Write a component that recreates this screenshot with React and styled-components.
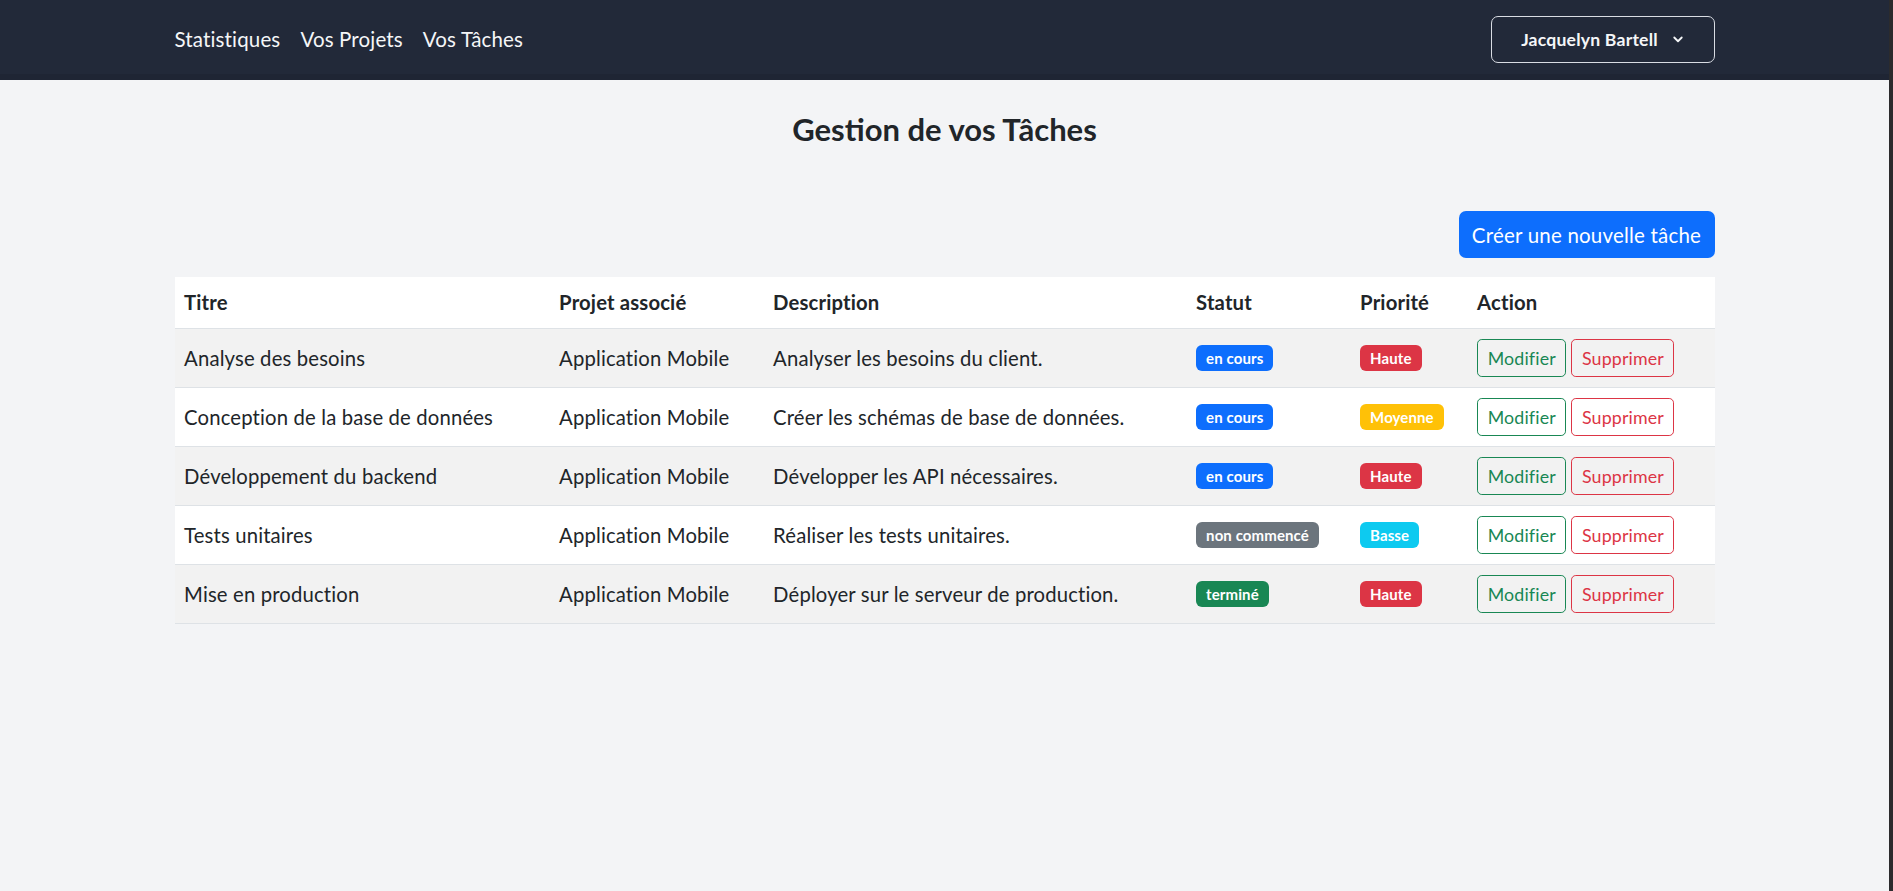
import React from "react";
import styled, { createGlobalStyle } from "styled-components";

const Global = createGlobalStyle`
  html {
    min-height: 100%;
    border-right: 4px solid #2b2b2d;
    background: #f3f4f6;
  }
  body {
    margin: 0;
    background: #f3f4f6;
    font-family: "Lato", "Inter", sans-serif;
    color: #212529;
    font-size: 20.3px;
    letter-spacing: 0.15px;
  }
  * { box-sizing: border-box; }
`;

const Nav = styled.nav`
  height: 80px;
  background: #222939;
  box-shadow: inset 0 -6px 0 #1f2534;
`;

const NavInner = styled.div`
  width: 1540px;
  margin: 0 auto;
  height: 100%;
  display: flex;
  align-items: center;
  justify-content: space-between;
  padding-bottom: 2px;
`;

const Links = styled.div`
  display: flex;
  gap: 20px;
  align-items: center;
`;

const NavLink = styled.a`
  color: #f5f6f8;
  font-size: 20.5px;
  text-decoration: none;
  cursor: pointer;
`;

const UserButton = styled.button`
  width: 224px;
  height: 47px;
  background: transparent;
  border: 1px solid #d9dce3;
  border-radius: 7px;
  color: #f5f6f8;
  font-family: inherit;
  font-size: 17.6px;
  font-weight: 700;
  letter-spacing: 0.2px;
  display: flex;
  align-items: center;
  justify-content: center;
  gap: 14px;
`;

const Main = styled.main`
  width: 1540px;
  margin: 0 auto;
  display: flex;
  flex-direction: column;
`;

const Title = styled.h2`
  margin: 31px 0 0;
  text-align: center;
  font-size: 31px;
  font-weight: 700;
  letter-spacing: 0;
  line-height: 1.2;
  color: #212529;
`;

const Toolbar = styled.div`
  display: flex;
  justify-content: flex-end;
  margin-top: 63px;
`;

const PrimaryButton = styled.button`
  width: 256px;
  height: 47px;
  background: #0d6efd;
  color: #fff;
  border: none;
  border-radius: 7px;
  font-family: inherit;
  font-size: 20.5px;
  letter-spacing: 0.2px;
`;

const Table = styled.table`
  margin-top: 19px;
  width: 100%;
  border-collapse: collapse;
  table-layout: fixed;
  background: #fff;
`;

const Th = styled.th`
  text-align: left;
  font-weight: 700;
  height: 51px;
  padding: 0 9.6px;
  border-bottom: 1px solid #dee2e6;
  width: ${(p) => p.$w}px;
`;

const Tr = styled.tr`
  background: ${(p) => (p.$striped ? "#f2f2f2" : "#fff")};
`;

const Td = styled.td`
  height: 59px;
  padding: 0 9.6px;
  border-bottom: 1px solid #dee2e6;
  vertical-align: middle;
  white-space: nowrap;
`;

const Badge = styled.span`
  display: inline-block;
  padding: 5.5px 10px;
  font-size: 15px;
  font-weight: 700;
  line-height: 1;
  letter-spacing: 0.1px;
  color: #fff;
  border-radius: 6px;
  background: ${(p) => p.$bg};
`;

const Actions = styled.div`
  display: flex;
  gap: 5px;
`;

const OutlineButton = styled.button`
  height: 38px;
  padding: 0 9.6px;
  background: transparent;
  border: 1px solid ${(p) => p.$color};
  color: ${(p) => p.$color};
  border-radius: 4.8px;
  font-family: inherit;
  font-size: 17.8px;
  letter-spacing: 0.15px;
`;

const statusColors = {
  "en cours": "#0d6efd",
  "non commencé": "#6c757d",
  "terminé": "#198754",
};
const prioColors = {
  Haute: "#dc3545",
  Moyenne: "#ffc107",
  Basse: "#0dcaf0",
};

const rows = [
  ["Analyse des besoins", "Analyser les besoins du client.", "en cours", "Haute"],
  ["Conception de la base de données", "Créer les schémas de base de données.", "en cours", "Moyenne"],
  ["Développement du backend", "Développer les API nécessaires.", "en cours", "Haute"],
  ["Tests unitaires", "Réaliser les tests unitaires.", "non commencé", "Basse"],
  ["Mise en production", "Déployer sur le serveur de production.", "terminé", "Haute"],
];

const Chevron = () => (
  <svg width="12" height="12" viewBox="0 0 16 16" fill="none" stroke="#f5f6f8" strokeWidth="2.4" strokeLinecap="round" strokeLinejoin="round">
    <path d="M3 6l5 5 5-5" />
  </svg>
);

export default function App() {
  return (
    <>
      <Global />
      <Nav>
        <NavInner>
          <Links>
            <NavLink>Statistiques</NavLink>
            <NavLink>Vos Projets</NavLink>
            <NavLink>Vos Tâches</NavLink>
          </Links>
          <UserButton>
            Jacquelyn Bartell <Chevron />
          </UserButton>
        </NavInner>
      </Nav>
      <Main>
        <Title>Gestion de vos Tâches</Title>
        <Toolbar>
          <PrimaryButton>Créer une nouvelle tâche</PrimaryButton>
        </Toolbar>
        <Table>
          <thead>
            <tr>
              <Th $w={375}>Titre</Th>
              <Th $w={214}>Projet associé</Th>
              <Th $w={423}>Description</Th>
              <Th $w={164}>Statut</Th>
              <Th $w={117}>Priorité</Th>
              <Th $w={247}>Action</Th>
            </tr>
          </thead>
          <tbody>
            {rows.map((r, i) => (
              <Tr key={i} $striped={i % 2 === 0}>
                <Td>{r[0]}</Td>
                <Td>Application Mobile</Td>
                <Td>{r[1]}</Td>
                <Td>
                  <Badge $bg={statusColors[r[2]]}>{r[2]}</Badge>
                </Td>
                <Td>
                  <Badge $bg={prioColors[r[3]]}>{r[3]}</Badge>
                </Td>
                <Td>
                  <Actions>
                    <OutlineButton $color="#198754">Modifier</OutlineButton>
                    <OutlineButton $color="#dc3545">Supprimer</OutlineButton>
                  </Actions>
                </Td>
              </Tr>
            ))}
          </tbody>
        </Table>
      </Main>
    </>
  );
}
